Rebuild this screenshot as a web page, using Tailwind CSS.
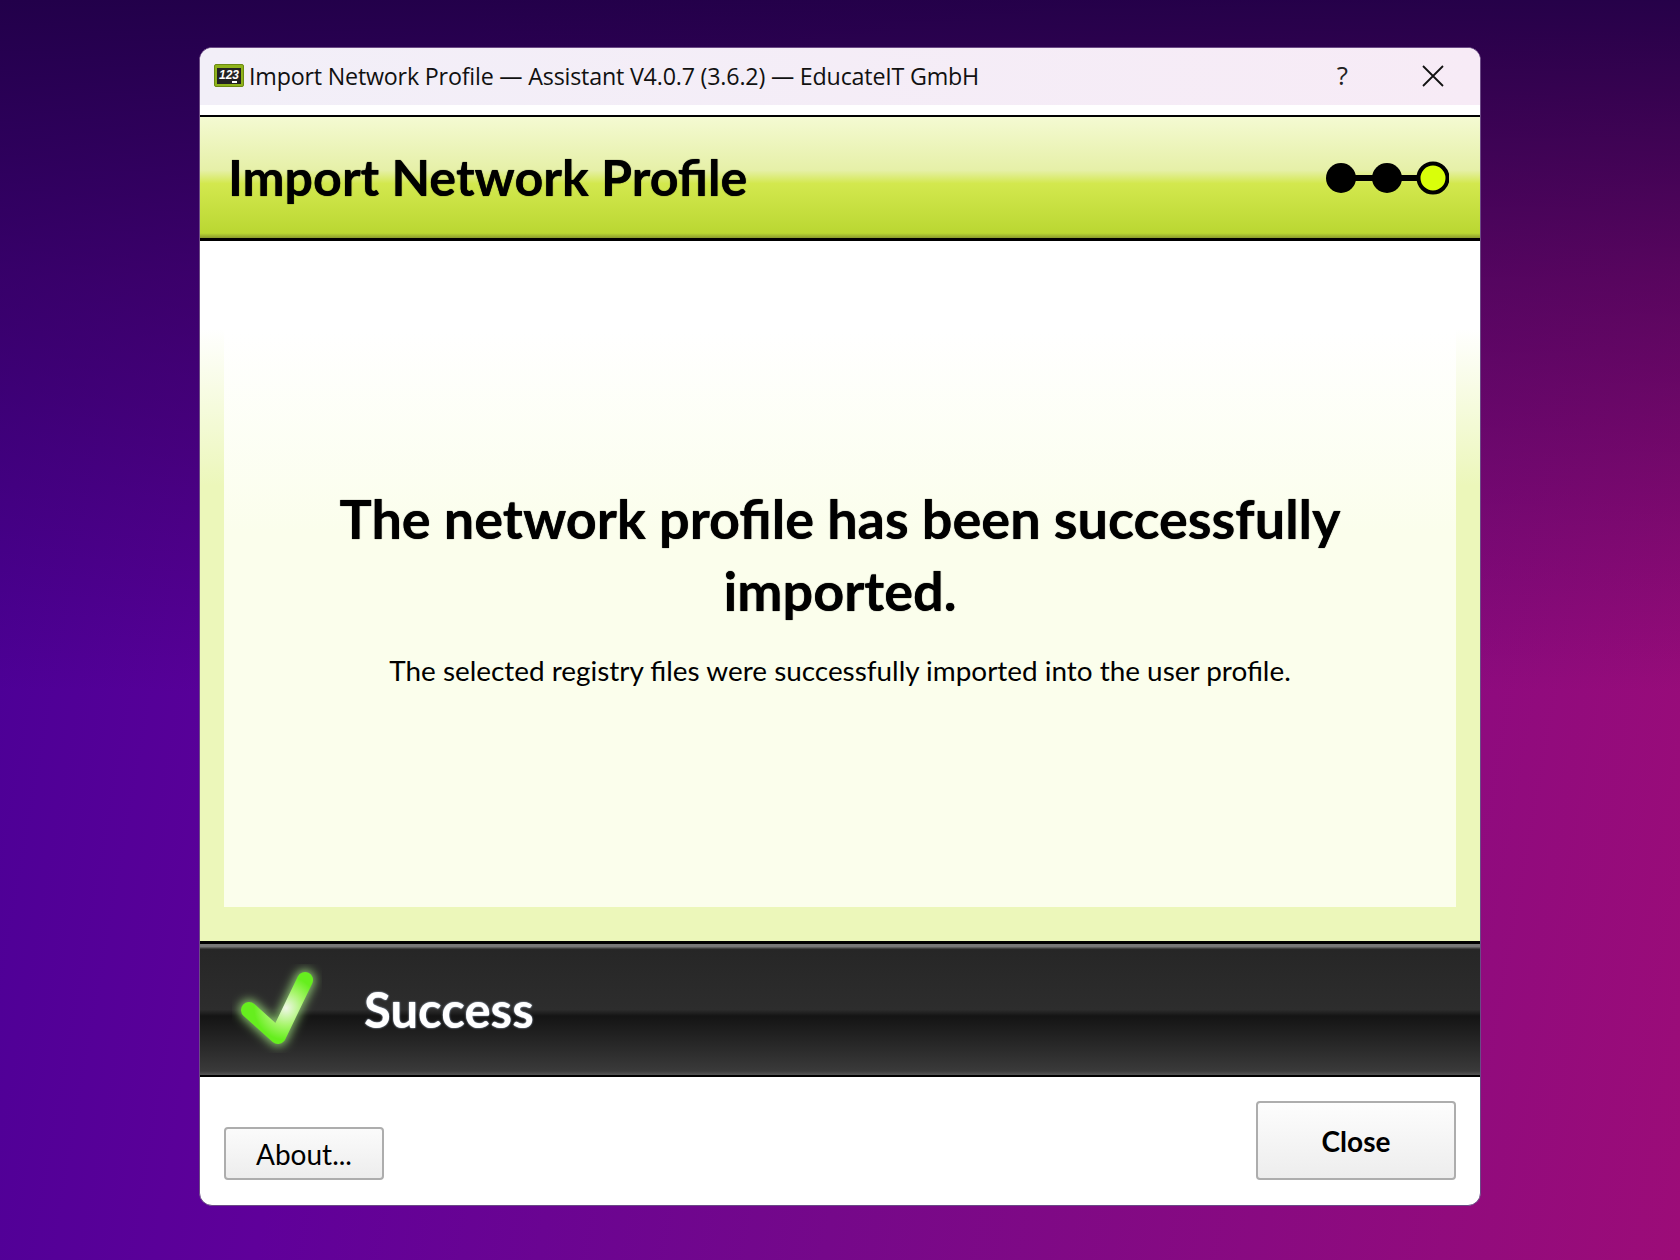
<!DOCTYPE html>
<html lang="en">
<head>
    <meta charset="UTF-8">
    <meta name="viewport" content="width=device-width, initial-scale=1.0">
    <title>Import Network Profile</title>
    <script src="https://cdn.jsdelivr.net/npm/@tailwindcss/browser@4"></script>
</head>
<body class="h-[1260px] overflow-hidden font-['Lato',sans-serif] text-black bg-[linear-gradient(180deg,rgba(32,0,70,0.95)_0%,rgba(40,0,70,0.55)_22%,rgba(40,0,70,0)_55%),linear-gradient(100deg,#470095_0%,#5f009a_25%,#75088a_55%,#9c0c78_100%)]">
    <div class="flex justify-center pt-[47px]">
        <!-- window -->
        <div class="w-[1282px] h-[1159px] flex flex-col rounded-[13px] overflow-hidden border border-[#6b4a86] bg-white">
            <!-- title bar -->
            <div class="h-[57px] shrink-0 flex items-center pl-[14px] bg-[linear-gradient(90deg,#f2eff8,#f7ebf6)]">
                <div class="relative w-[30px] h-[23px] flex items-center justify-center bg-[#8fb31c] border border-[#6c8a12] rounded-[2px] mt-[-2px]">
                    <span class="w-[24px] h-[16px] bg-[#222] text-white text-[12px] leading-[14px] font-bold italic text-center font-['Liberation_Sans',sans-serif]">123</span>
                    <span class="absolute right-[6px] bottom-[3px] w-[5px] h-[2px] bg-white"></span>
                </div>
                <span class="ml-[5px] mt-[1px] text-[23.27px] leading-none font-['Open_Sans',sans-serif] tracking-[-0.2px] text-[#111]">Import Network Profile — Assistant V4.0.7 (3.6.2) — EducateIT GmbH</span>
                <span class="ml-auto text-[26px] leading-none font-['Open_Sans',sans-serif] text-[#222] mt-[-3px]">?</span>
                <svg class="ml-[74px] mr-[36px] mt-[-2px]" width="22" height="22" viewBox="0 0 22 22" fill="none" stroke="#111" stroke-width="1.8"><path d="M1 1 21 21M21 1 1 21"/></svg>
            </div>
            <div class="h-[10px] shrink-0 bg-white"></div>

            <!-- header -->
            <div class="h-[126px] shrink-0 flex items-center justify-between pl-[28px] pr-[31px] border-t-[2px] border-b-[3px] border-t-black border-b-black bg-[linear-gradient(180deg,#f4fad2_0%,#e6f0a8_44%,#d3e84e_55%,#bad732_96%,#8a9a2c_100%)]">
                <h1 class="text-[50.2px] leading-none font-bold [text-shadow:0_0_1px_#000]">Import Network Profile</h1>
                <svg class="mt-[1px]" width="126" height="36" viewBox="0 0 126 36">
                    <path d="M18 18H110" stroke="#000" stroke-width="6"/>
                    <circle cx="18" cy="18" r="15"/>
                    <circle cx="64" cy="18" r="15"/>
                    <circle cx="110" cy="18" r="14.5" fill="#d9ff0a" stroke="#000" stroke-width="4"/>
                </svg>
            </div>

            <!-- content -->
            <div class="h-[700px] shrink-0 flex flex-col px-[24px] pt-[89px] pb-[34px] bg-[linear-gradient(180deg,#ffffff_0%,#ffffff_12.5%,#ecf7ba_35%,#ecf7ba_100%)]">
                <div class="flex-1 flex flex-col items-center pt-[153px] bg-[linear-gradient(180deg,#ffffff_0%,#fbfeec_35%,#fbfeec_100%)]">
                    <h2 class="w-[1100px] text-center text-[54px] leading-[72px] font-bold [text-shadow:0_0_1px_#000]">The network profile has been successfully imported.</h2>
                    <p class="mt-[24px] text-[27.9px] leading-[38px]">The selected registry files were successfully imported into the user profile.</p>
                </div>
            </div>

            <!-- status band -->
            <div class="h-[136px] shrink-0 flex items-center border-t-[3px] border-b-[2px] border-t-black border-b-black bg-[linear-gradient(180deg,#777_0%,#777_2%,#262626_4%,#2d2d2d_50%,#141414_55%,#3a3a3a_97%,#555_100%)]">
                <svg class="ml-[32px] mt-[-2px]" width="90" height="90" viewBox="0 0 90 90" fill="none">
                    <defs>
                        <radialGradient id="checkFill" gradientUnits="userSpaceOnUse" cx="54" cy="44" r="32">
                            <stop offset="0" stop-color="#f0f6e8"/>
                            <stop offset="0.55" stop-color="#a6f56a"/>
                            <stop offset="1" stop-color="#66ee1e"/>
                        </radialGradient>
                        <filter id="checkGlow" x="-30%" y="-30%" width="160%" height="160%"><feGaussianBlur stdDeviation="5"/></filter>
                    </defs>
                    <path d="M17 46 46 72 73 16" stroke="#a8ef86" stroke-opacity="0.75" stroke-width="21" stroke-linecap="round" stroke-linejoin="round" filter="url(#checkGlow)"/>
                    <path d="M17 46 46 72 73 16" stroke="url(#checkFill)" stroke-width="16" stroke-linecap="round" stroke-linejoin="round"/>
                </svg>
                <span class="ml-[42px] mt-[0px] text-[49px] leading-none font-bold text-white [text-shadow:0_0_2px_#cfe3ff]">Success</span>
            </div>

            <!-- footer -->
            <div class="flex-1 flex items-end justify-between px-[24px] pb-[25px]">
                <button class="w-[160px] h-[53px] rounded-[4px] border-2 border-[#adadad] text-[28px] leading-none bg-[linear-gradient(180deg,#fbfbfb,#ededed)]">About...</button>
                <button class="w-[200px] h-[79px] rounded-[4px] border-2 border-[#adadad] text-[28px] leading-none font-bold bg-[linear-gradient(180deg,#fdfdfd,#ededed)]">Close</button>
            </div>
        </div>
    </div>
</body>
</html>
